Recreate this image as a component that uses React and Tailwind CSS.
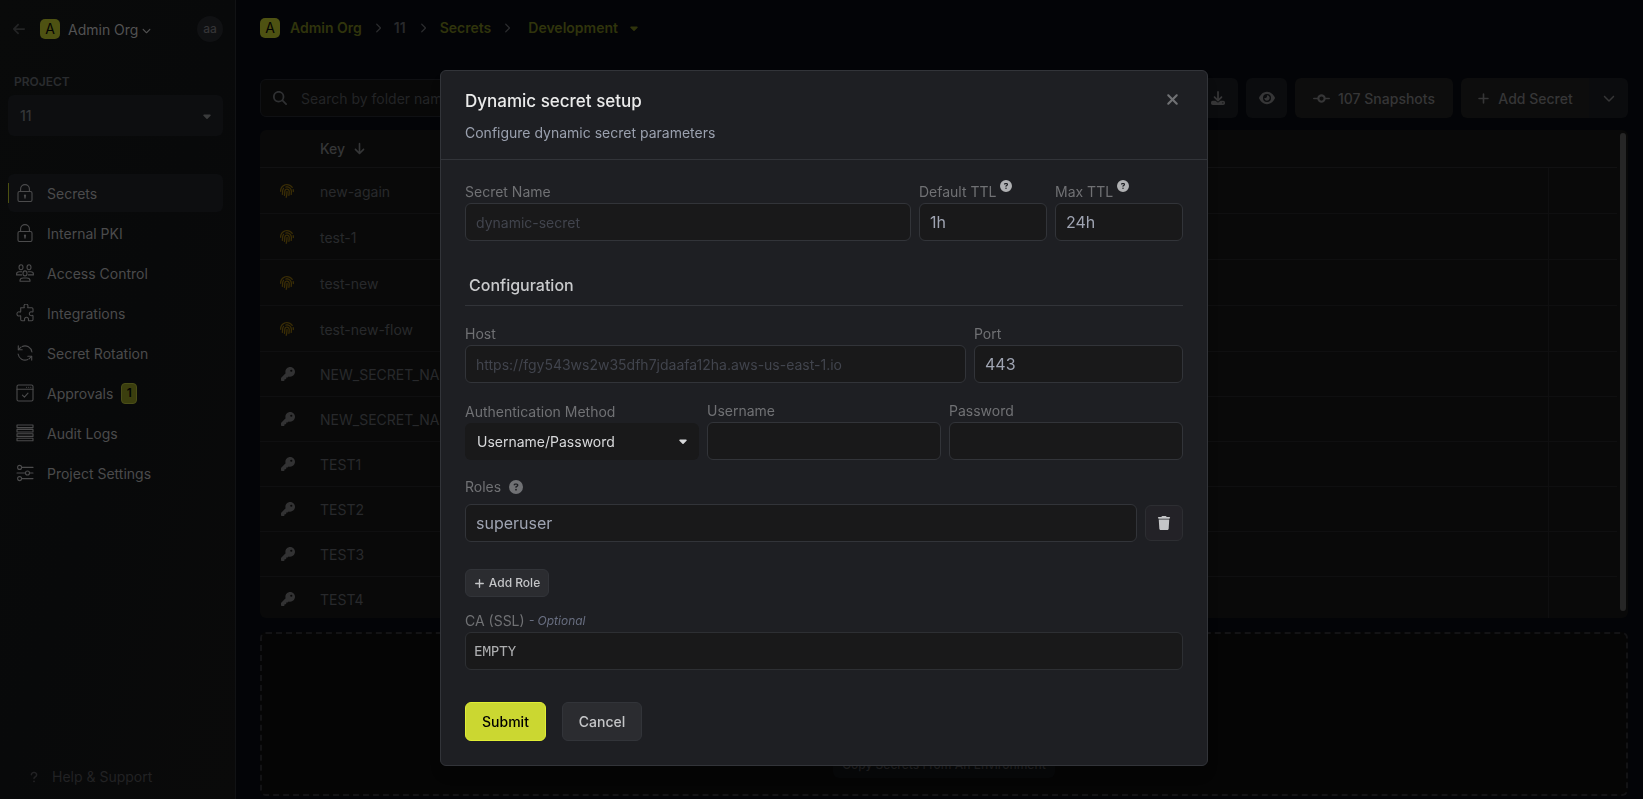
import React from "react";
import { FaFingerprint } from "react-icons/fa";
import {
  FaArrowDown,
  FaArrowLeft,
  FaCaretDown,
  FaChevronDown,
  FaChevronRight,
  FaCircleQuestion,
  FaCodeCommit,
  FaDownload,
  FaEye,
  FaKey,
  FaMagnifyingGlass,
  FaPlus,
  FaQuestion,
  FaTrash,
  FaXmark,
} from "react-icons/fa6";

const Line = ({ children }) => (
  <svg
    viewBox="0 0 18 18"
    className="size-[18px] shrink-0"
    fill="none"
    stroke="currentColor"
    strokeWidth="1.1"
    strokeLinecap="round"
    strokeLinejoin="round"
    aria-hidden="true"
  >
    {children}
  </svg>
);

const LockIcon = () => (
  <Line>
    <rect x="2" y="7.5" width="14" height="10" rx="1.5" />
    <path d="M4.6 7.5V5a4.4 4.4 0 0 1 8.8 0v2.5" />
    <path d="M9 12v2" strokeWidth="1.4" />
    <circle cx="9" cy="11.7" r="0.6" fill="currentColor" />
  </Line>
);

const GroupIcon = () => (
  <Line>
    <ellipse cx="5" cy="3.3" rx="2" ry="2.5" />
    <ellipse cx="13" cy="3.3" rx="2" ry="2.5" />
    <ellipse cx="9" cy="9.4" rx="2" ry="2.5" />
    <path d="M4 17.300v-.9c0-1.500 1.600-2.400 3.200-2.400h3.600c1.600 0 3.200.9 3.200 2.400v.9Z" />
    <path d="M5.600 10.900H.6v-.9c0-1.300 1-2.200 2.600-2.200h2.600M12.400 10.900h5v-.9c0-1.300-1-2.200-2.600-2.200h-2.600" />
  </Line>
);

const PuzzleIcon = () => (
  <Line>
    <path d="M4.700 3.700h3.100c.5 0 .6-.4.4-.8a2 2 0 1 1 3.600 0c-.2.4-.1.8.4.800h3.600c.7 0 1.200.5 1.200 1.200v2.600c0 .5-.4.6-.8.4a2 2 0 1 0 0 3.600c.4-.2.8-.1.8.4v3.600c0 .7-.5 1.200-1.200 1.200h-2.900c-.5 0-.6-.4-.5-.8a2 2 0 1 0-3.800 0c.1.4 0 .8-.5.800H5.900c-.7 0-1.200-.5-1.200-1.200v-3.300c0-.5-.4-.6-.8-.4a2.100 2.100 0 1 1 0-3.800c.4.2.8.1.8-.4Z" />
  </Line>
);

const RotateIcon = () => (
  <Line>
    <path d="M6.200 2.500A7 7 0 0 1 15.900 8M11.800 15.500A7 7 0 0 1 2.100 10" />
    <path d="M6.200 5.800H2.300V1.900M11.800 12.200h3.900v3.900" />
    <path d="M2.400 5.700 5 3.200M15.600 12.300 13 14.800" />
  </Line>
);

const ApprovalIcon = () => (
  <Line>
    <rect x="1" y="1" width="16" height="16" rx="1.500" />
    <path d="M1 5.200h16M10.500 3.200h.1M12.600 3.200h.1M14.700 3.200h.1" />
    <path d="m6.400 11.200 2 2 3.600-4" />
  </Line>
);

const LogsIcon = () => (
  <Line>
    <rect x="1" y="1" width="16" height="2.600" />
    <rect x="1" y="5.400" width="16" height="2.600" />
    <rect x="1" y="9.800" width="16" height="2.600" />
    <rect x="1" y="14.200" width="16" height="2.600" />
  </Line>
);

const SettingsIcon = () => (
  <Line>
    <circle cx="3.600" cy="3.400" r="2" />
    <circle cx="11.500" cy="9" r="2" />
    <circle cx="3.600" cy="14.600" r="2" />
    <path d="M5.600 3.400H17M1 9h8.500M13.500 9H17M5.600 14.600H17" />
  </Line>
);

const navItems = [
  { label: "Secrets", Icon: LockIcon, active: true },
  { label: "Internal PKI", Icon: LockIcon },
  { label: "Access Control", Icon: GroupIcon },
  { label: "Integrations", Icon: PuzzleIcon },
  { label: "Secret Rotation", Icon: RotateIcon },
  { label: "Approvals", Icon: ApprovalIcon, badge: "1" },
  { label: "Audit Logs", Icon: LogsIcon },
  { label: "Project Settings", Icon: SettingsIcon },
];

const rows = [
  { name: "new-again", dynamic: true },
  { name: "test-1", dynamic: true },
  { name: "test-new", dynamic: true },
  { name: "test-new-flow", dynamic: true },
  { name: "NEW_SECRET_NAME" },
  { name: "NEW_SECRET_NAME_2" },
  { name: "TEST1" },
  { name: "TEST2" },
  { name: "TEST3" },
  { name: "TEST4" },
];

function Sidebar() {
  return (
    <aside className="flex w-[236px] shrink-0 flex-col border-r border-[#111214] bg-linear-to-br from-[#090a0a] via-[#08090a] to-[#0a0a0a] pr-3 pl-2 text-sm text-[#4b4b4c]">
      <div className="mt-4 flex h-[26px] items-center">
        <a href="#back" aria-label="Back" className="ml-1 text-[#232425]">
          <FaArrowLeft className="size-[14px]" />
        </a>
        <span className="ml-3.5 flex size-5 items-center justify-center rounded-[5px] bg-[#4e5212] text-[#030303]">
          A
        </span>
        <button type="button" className="ml-2 flex items-center gap-1 pt-0.5 text-[#525253]">
          Admin Org
          <FaChevronDown className="size-[9px]" />
        </button>
        <button
          type="button"
          className="ml-auto size-[26px] rounded-full bg-[#101113] text-xs leading-none font-medium text-[#343436]"
        >
          aa
        </button>
      </div>

      <label htmlFor="project" className="mt-8 ml-1.5 text-xs font-semibold text-[#2a2c2f]">
        PROJECT
      </label>
      <div className="relative mt-[5px]">
        <select
          id="project"
          className="h-[41px] w-full appearance-none rounded-md bg-[#0d0e10] px-3 font-medium text-[#343638]"
        >
          <option>11</option>
        </select>
        <FaCaretDown className="pointer-events-none absolute top-[15px] right-[10px] size-3 text-[#3a3b3c]" />
      </div>

      <nav className="mt-[38px] flex flex-col gap-0.5">
        {navItems.map(({ label, Icon, active, badge }) => (
          <a
            key={label}
            href={"#" + label.toLowerCase().replace(" ", "-")}
            className={
              active
                ? "relative flex h-[38px] items-center rounded-md bg-[#0d0e10] pl-2"
                : "flex h-[38px] items-center rounded-md pl-2"
            }
          >
            {active && <span className="absolute top-[9px] left-0 h-5 w-px bg-[#4b5011]" />}
            <Icon />
            <span className="ml-[13px] pt-0.5">{label}</span>
            {badge && (
              <span className="ml-2 flex h-[21px] w-4 items-center justify-center rounded-sm border border-[#4a4e18] bg-[#3b3e0e] text-xs font-semibold text-[#030303]">
                {badge}
              </span>
            )}
          </a>
        ))}
      </nav>

      <button type="button" className="mt-auto mb-3 flex h-5 items-center text-[#222224]">
        <FaQuestion className="ml-5 size-3" />
        <span className="ml-3">Help &amp; Support</span>
      </button>
    </aside>
  );
}

function Breadcrumbs() {
  return (
    <nav className="mt-[18px] flex h-5 items-center text-sm font-semibold text-[#30340c]">
      <span className="flex size-5 items-center justify-center rounded-[5px] bg-[#4e5212] font-normal text-[#030303]">
        A
      </span>
      <a href="#org" className="ml-2.5">
        Admin Org
      </a>
      <FaChevronRight className="mx-[11px] size-[10px] text-[#2b2c2e]" />
      <a href="#project-11" className="text-[#28292b]">
        11
      </a>
      <FaChevronRight className="mx-3 size-[10px] text-[#2b2c2e]" />
      <a href="#secrets">Secrets</a>
      <FaChevronRight className="ml-[11px] size-[10px] text-[#2b2c2e]" />
      <button type="button" className="ml-4 flex items-center gap-2.5">
        Development
        <FaCaretDown className="size-3" />
      </button>
    </nav>
  );
}

function Toolbar() {
  return (
    <div className="mt-10 flex items-center gap-2 text-sm font-medium text-[#363637]">
      <div className="flex h-[38px] flex-1 items-center rounded-md border border-[#0f1013] bg-[#080808] pl-3">
        <FaMagnifyingGlass className="size-[14px] text-[#2f3032]" />
        <input
          aria-label="Search secrets"
          placeholder="Search by folder name, secret name, tag..."
          className="ml-3.5 flex-1 bg-transparent pt-0.5 font-normal outline-none placeholder:text-[#232426]"
        />
      </div>
      <button
        type="button"
        aria-label="Download"
        className="flex h-10 w-[41px] items-center justify-center rounded-md bg-[#0b0c0e]"
      >
        <FaDownload className="size-[14px]" />
      </button>
      <button
        type="button"
        aria-label="Reveal values"
        className="flex h-10 w-[41px] items-center justify-center rounded-md bg-[#0b0c0e]"
      >
        <FaEye className="size-4" />
      </button>
      <button
        type="button"
        className="flex h-10 w-[158px] items-center justify-center gap-2 rounded-md bg-[#0d0d0d]"
      >
        <FaCodeCommit className="size-[17px]" />
        <span className="pt-0.5">107 Snapshots</span>
      </button>
      <div className="flex">
        <button
          type="button"
          className="flex h-10 w-32 items-center justify-center gap-2 rounded-l-md bg-[#0d0d0d]"
        >
          <FaPlus className="size-[13px]" />
          <span className="pt-0.5">Add Secret</span>
        </button>
        <button
          type="button"
          aria-label="More options"
          className="flex h-10 w-[39px] items-center justify-center rounded-r-md bg-[#0b0c0e]"
        >
          <FaChevronDown className="size-3" />
        </button>
      </div>
    </div>
  );
}

function SecretsTable() {
  return (
    <div className="mt-3 flex min-h-0 flex-1 items-start overflow-hidden rounded-md bg-[#090909]">
      <table className="flex-1 table-fixed border-separate border-spacing-0 text-left text-sm text-[#28292c]">
        <thead>
          <tr className="h-[38px]">
            <th className="w-[60px] border-b border-[#111112]" aria-label="Type" />
            <th className="border-b border-[#111112] font-medium text-[#353637]">
              <span className="flex items-center gap-2">
                Key
                <FaArrowDown className="size-[13px]" />
              </span>
            </th>
            <th className="w-[69px] border-b border-[#111112]" aria-label="Actions" />
          </tr>
        </thead>
        <tbody>
          {rows.map(({ name, dynamic }) => (
            <tr key={name} className={dynamic ? "h-[46px]" : "h-[45px]"}>
              <td className="border-b border-[#0f0f10] pl-5">
                {dynamic ? (
                  <FaFingerprint className="size-[14px] text-[#3a2d06]" />
                ) : (
                  <FaKey className="ml-px size-[14px] text-[#323233]" />
                )}
              </td>
              <td className="border-b border-[#0f0f10] pt-0.5">{name}</td>
              <td className="border-b border-l border-[#0f0f10]" />
            </tr>
          ))}
        </tbody>
      </table>
      <div className="flex w-[11px] self-stretch py-[3px] pr-0.5 pl-[3px]">
        <div className="mb-1 flex-1 rounded-full bg-[#262626]" />
      </div>
    </div>
  );
}

const fieldClass =
  "rounded-md border border-[#323439] bg-[#19191a] px-2.5 text-base text-[#9fa4b2] outline-none placeholder:text-sm placeholder:text-[#41444d]";

const labelClass = "flex h-[23px] text-sm leading-[23px] text-[#707174]";

function TextField({ id, label, tip, className, ...input }) {
  return (
    <div className={className}>
      <label htmlFor={id} className={labelClass}>
        {label}
        {tip && <FaCircleQuestion className="ml-1 size-3 text-[#b0b1b3]" />}
      </label>
      <input id={id} className={"h-[38px] w-full " + fieldClass} {...input} />
    </div>
  );
}

function DynamicSecretDialog() {
  return (
    <div className="fixed inset-0 flex items-start justify-center pt-[70px] pl-[5px]">
      <section
        role="dialog"
        aria-modal="true"
        aria-labelledby="dialog-title"
        className="w-full max-w-3xl rounded-md border border-[#323439] bg-[#1e1f23] shadow-lg"
      >
        <header className="flex items-start justify-between border-b border-[#323439] px-6 py-4">
          <div>
            <h2 id="dialog-title" className="text-[17px] leading-7 font-medium text-[#ebebeb]">
              Dynamic secret setup
            </h2>
            <p className="mt-2 text-sm text-[#9aa0ae]">Configure dynamic secret parameters</p>
          </div>
          <button type="button" aria-label="Close" className="mt-1 mr-0.5 text-[#707174]">
            <FaXmark className="size-[17px]" />
          </button>
        </header>

        <form className="px-6 pt-5 pb-6" onSubmit={(event) => event.preventDefault()}>
          <div className="flex gap-2">
            <TextField
              id="secret-name"
              label="Secret Name"
              className="flex-1"
              placeholder="dynamic-secret"
            />
            <TextField id="default-ttl" label="Default TTL" tip className="w-32" defaultValue="1h" />
            <TextField id="max-ttl" label="Max TTL" tip className="w-32" defaultValue="24h" />
          </div>

          <h3 className="mt-8 border-b border-[#323439] pb-2 pl-1 text-base font-medium text-[#c9cacc]">
            Configuration
          </h3>

          <div className="mt-4 flex gap-2">
            <TextField
              id="host"
              label="Host"
              className="flex-1"
              placeholder="https://fgy543ws2w35dfh7jdaafa12ha.aws-us-east-1.io"
            />
            <TextField id="port" label="Port" className="w-[209px]" defaultValue="443" />
          </div>

          <div className="mt-4 grid grid-cols-3 items-end gap-2">
            <div>
              <label htmlFor="auth-method" className={labelClass}>
                Authentication Method
              </label>
              <div className="relative">
                <select
                  id="auth-method"
                  className="block h-[37px] w-full appearance-none rounded-md bg-[#19191a] px-3 text-sm text-[#d8d9db] outline-none"
                >
                  <option>Username/Password</option>
                  <option>API Key</option>
                </select>
                <FaCaretDown className="pointer-events-none absolute top-3 right-2.5 size-3 text-[#d8d9db]" />
              </div>
            </div>
            <TextField id="username" label="Username" autoComplete="off" />
            <TextField id="password" label="Password" type="password" autoComplete="off" />
          </div>

          <div className="mt-4">
            <label htmlFor="role" className="mb-1.5 flex h-[22px] items-center gap-2 text-sm text-[#707174]">
              Roles
              <FaCircleQuestion className="size-[14px]" />
            </label>
            <div className="flex items-center gap-2">
              <input id="role" defaultValue="superuser" className={"h-[38px] flex-1 " + fieldClass} />
              <button
                type="button"
                aria-label="Remove role"
                className="flex h-9 w-[38px] items-center justify-center rounded-md border border-[#2d2e32] bg-[#232227] text-[#c4c5c7]"
              >
                <FaTrash className="size-[14px]" />
              </button>
            </div>
            <button
              type="button"
              className="mt-[27px] flex h-7 w-[84px] items-center justify-center gap-1 rounded-md border border-[#323439] bg-[#2b2c30] text-xs font-medium text-[#c4c5c7]"
            >
              <FaPlus className="size-[11px]" />
              Add Role
            </button>
          </div>

          <div className="mt-3">
            <label htmlFor="ca" className={labelClass}>
              CA (SSL)
              <span className="ml-1 text-xs leading-[23px] text-[#686e80] italic">- Optional</span>
            </label>
            <input
              id="ca"
              defaultValue="EMPTY"
              className="h-[38px] w-full rounded-md border border-[#2d2f33] bg-[#19191a] px-2 font-['DejaVu_Sans_Mono',monospace] text-sm text-[#adaeb0] outline-none"
            />
          </div>

          <div className="mt-8 flex gap-4 text-sm font-medium">
            <button
              type="submit"
              className="h-[39px] w-[81px] rounded-md border border-[#e0ed34] bg-[#cbd731] text-black"
            >
              Submit
            </button>
            <button
              type="button"
              className="h-[39px] w-20 rounded-md border border-[#323439] bg-[#2b2c30] text-[#c4c5c7]"
            >
              Cancel
            </button>
          </div>
        </form>
      </section>
    </div>
  );
}

export default function App() {
  return (
    <div className="flex h-screen overflow-hidden bg-[#030407] font-[Inter,sans-serif]">
      <Sidebar />
      <main className="flex min-w-0 flex-1 flex-col pr-[15px] pb-[3px] pl-6">
        <Breadcrumbs />
        <Toolbar />
        <SecretsTable />
        <div className="mt-3.5 flex h-[164px] shrink-0 items-end justify-center rounded-md border-2 border-dashed border-[#131315] bg-[#050505] pb-4">
          <button
            type="button"
            className="h-7 w-[222px] rounded-md bg-[#070809] pt-0.5 text-xs font-medium whitespace-nowrap text-[#1f1f20]"
          >
            Copy Secrets From An Environment
          </button>
        </div>
      </main>
      <DynamicSecretDialog />
    </div>
  );
}
